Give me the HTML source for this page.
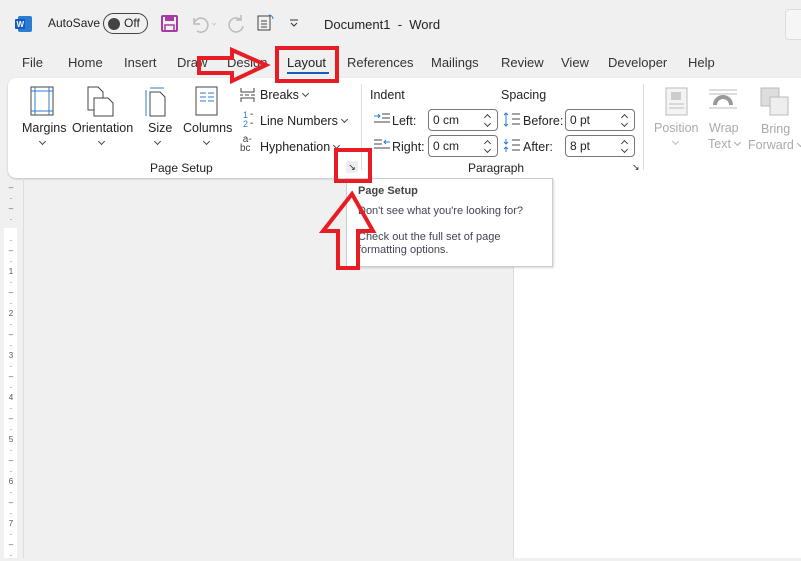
<!DOCTYPE html>
<html><head><style>
*{margin:0;padding:0;box-sizing:border-box}
body{width:801px;height:558px;overflow:hidden;background:#f0f0f0;font-family:"Liberation Sans",sans-serif;color:#222;position:relative;font-size:12px}
.a{position:absolute;white-space:nowrap}
.tab{position:absolute;top:55px;font-size:13px;color:#333}
.g{color:#aaa}
.cv{position:absolute;width:5px;height:5px;border-right:1.2px solid #444;border-bottom:1.2px solid #444;transform:rotate(45deg)}
.ci{display:inline-block;width:5px;height:5px;border-right:1.2px solid #444;border-bottom:1.2px solid #444;transform:rotate(45deg);margin:0 0 3px 4px}
.g .ci{border-color:#aaa}
.spin{position:absolute;width:70px;height:22px;border:1px solid #777;border-radius:4px;background:#fff;font-size:12px;padding:3px 4px}
.up,.dn{position:absolute;right:7px;width:5px;height:5px;border-left:1px solid #444;border-top:1px solid #444}
.up{top:5px;transform:rotate(45deg)}.dn{top:11px;transform:rotate(225deg)}
</style></head><body>
<svg class="a" style="left:15px;top:16px" width="18" height="16"><rect x="3" y="0" width="14" height="16" rx="2" fill="#2b7cd3"/><rect x="0" y="3" width="10" height="10" rx="1" fill="#185abd"/><text x="1.5" y="11" font-size="8" fill="#fff" font-family="Liberation Sans" font-weight="bold">W</text></svg>
<div class="a" style="left:48px;top:16px;font-size:12px">AutoSave</div>
<div class="a" style="left:103px;top:13px;width:45px;height:21px;border:1px solid #444;border-radius:11px"></div>
<div class="a" style="left:108px;top:18px;width:12px;height:12px;border-radius:6px;background:#444"></div>
<div class="a" style="left:124px;top:16px;font-size:12px">Off</div>
<svg class="a" style="left:161px;top:15px" width="17" height="17"><rect x="1" y="1" width="15" height="15" rx="1" fill="none" stroke="#a83aa3" stroke-width="2"/><rect x="4" y="1" width="9" height="5" fill="#a83aa3"/><rect x="4" y="10" width="9" height="6" fill="none" stroke="#a83aa3" stroke-width="1.5"/></svg>
<svg class="a" style="left:190px;top:14px" width="30" height="20"><path d="M4 4v6h6M4 10a7 7 0 1 1 3 7" stroke="#bbb" stroke-width="1.5" fill="none"/><path d="M22 9l2 2 2-2" stroke="#ccc" fill="none"/></svg>
<svg class="a" style="left:227px;top:13px" width="20" height="20"><path d="M14 2v5h-5" stroke="#bbb" stroke-width="1.5" fill="none"/><path d="M14 7a7 7 0 1 0 2 6" stroke="#bbb" stroke-width="1.5" fill="none"/></svg>
<svg class="a" style="left:257px;top:14px" width="18" height="18"><rect x="1" y="2" width="12" height="14" fill="none" stroke="#444"/><path d="M4 7h6M4 10h6M4 13h6" stroke="#444"/><path d="M12 1a4 4 0 0 1 4 4" stroke="#2b7cd3" fill="none"/></svg>
<svg class="a" style="left:289px;top:18px" width="10" height="10"><path d="M1 2h8M2 5l3 3 3-3" stroke="#333" fill="none"/></svg>
<div class="a" style="left:324px;top:17px;font-size:13px">Document1 &nbsp;- &nbsp;Word</div>
<div class="a" style="left:785px;top:9px;width:30px;height:31px;border:1px solid #ddd;border-radius:4px;background:#f6f6f6"></div>
<div class="tab" style="left:22px">File</div><div class="tab" style="left:68px">Home</div><div class="tab" style="left:124px">Insert</div><div class="tab" style="left:177px">Draw</div><div class="tab" style="left:227px">Design</div><div class="tab" style="left:287px;color:#222">Layout</div>
<div class="a" style="left:287px;top:72px;width:42px;height:2px;background:#185abd"></div>
<div class="tab" style="left:347px">References</div><div class="tab" style="left:431px">Mailings</div><div class="tab" style="left:501px">Review</div><div class="tab" style="left:561px">View</div><div class="tab" style="left:608px">Developer</div><div class="tab" style="left:688px">Help</div>
<div class="a" style="left:8px;top:78px;width:800px;height:100px;background:#fff;border-radius:8px;box-shadow:0 1px 2px rgba(0,0,0,.2)"></div>
<svg class="a" style="left:30px;top:86px" width="26" height="32"><rect x="1" y="1" width="22" height="28" fill="none" stroke="#444"/><path d="M5 1v28M19 1v28M1 5h22M1 25h22" stroke="#2b7cd3"/></svg>
<svg class="a" style="left:86px;top:86px" width="32" height="32"><path d="M2 1h10l5 5v18H2z" fill="none" stroke="#444"/><path d="M8 12h14l5 5v13H8z" fill="#fff" stroke="#444"/></svg>
<svg class="a" style="left:144px;top:86px" width="26" height="32"><path d="M6 2h14M2 4v26" stroke="#2b7cd3"/><path d="M6 6h10l5 5v19H6z" fill="none" stroke="#444"/></svg>
<svg class="a" style="left:195px;top:86px" width="24" height="32"><rect x="1" y="1" width="21" height="28" fill="none" stroke="#444"/><path d="M5 7h6M13 7h6M5 11h6M13 11h6M5 15h6M13 15h6" stroke="#2b7cd3"/></svg>
<div class="a" style="left:22px;top:121px;font-size:12.5px">Margins</div><div class="a" style="left:72px;top:121px;font-size:12.5px">Orientation</div><div class="a" style="left:148px;top:121px;font-size:12.5px">Size</div><div class="a" style="left:183px;top:121px;font-size:12.5px">Columns</div>
<div class="cv" style="left:40px;top:139px"></div><div class="cv" style="left:99px;top:139px"></div><div class="cv" style="left:155px;top:139px"></div><div class="cv" style="left:204px;top:139px"></div>
<svg class="a" style="left:239px;top:87px" width="18" height="16"><path d="M2 1v4h13V1M2 15v-4h13v4M1 8h3M6 8h4M12 8h4" stroke="#444" fill="none"/></svg>
<div class="a" style="left:260px;top:88px;font-size:12.5px">Breaks<span class="ci"></span></div>
<div class="a" style="left:243px;top:111px;font-size:9px;color:#2b7cd3;line-height:9px">1<br>2</div><div class="a" style="left:250px;top:110px;font-size:10px;line-height:9px">-<br>-</div>
<div class="a" style="left:260px;top:114px;font-size:12.5px">Line Numbers<span class="ci"></span></div>
<div class="a" style="left:240px;top:135px;font-size:10px;line-height:9px;color:#444">&nbsp;a-<br>bc</div>
<div class="a" style="left:260px;top:140px;font-size:12.5px">Hyphenation<span class="ci"></span></div>
<div class="a" style="left:150px;top:161px;font-size:12px">Page Setup</div>
<div class="a" style="left:346px;top:161px;width:12px;height:12px;background:#eee;border-radius:2px;font-size:9px;text-align:center;line-height:12px">↘</div>
<div class="a" style="left:361px;top:84px;width:1px;height:86px;background:#ddd"></div>
<div class="a" style="left:370px;top:88px;font-size:12.5px">Indent</div><div class="a" style="left:501px;top:88px;font-size:12.5px">Spacing</div>
<svg class="a" style="left:373px;top:113px" width="18" height="12"><path d="M1 3h6M5 1l2 2-2 2" stroke="#2b7cd3" fill="none"/><path d="M9 1h8M9 5h8M1 9h16" stroke="#444"/></svg>
<div class="a" style="left:392px;top:114px;font-size:12.5px">Left:</div>
<svg class="a" style="left:373px;top:139px" width="18" height="12"><path d="M1 1h8M1 5h8M1 9h16" stroke="#444"/><path d="M11 3h6M13 1l-2 2 2 2" stroke="#2b7cd3" fill="none"/></svg>
<div class="a" style="left:392px;top:140px;font-size:12.5px">Right:</div>
<div class="spin" style="left:428px;top:109px">0 cm<i class="up"></i><i class="dn"></i></div><div class="spin" style="left:428px;top:135px">0 cm<i class="up"></i><i class="dn"></i></div>
<svg class="a" style="left:503px;top:112px" width="18" height="15"><path d="M3 1v13M1 3l2-2 2 2M1 12l2 2 2-2" stroke="#2b7cd3" fill="none"/><path d="M9 2h8M9 7h8M9 12h8" stroke="#444"/></svg>
<div class="a" style="left:523px;top:114px;font-size:12.5px">Before:</div>
<svg class="a" style="left:503px;top:138px" width="18" height="15"><path d="M3 1v5M3 9v5M1 4l2 2 2-2M1 11l2-2 2 2" stroke="#2b7cd3" fill="none"/><path d="M9 2h8M9 7h8M9 12h8" stroke="#444"/></svg>
<div class="a" style="left:523px;top:140px;font-size:12.5px">After:</div>
<div class="spin" style="left:565px;top:109px">0 pt<i class="up"></i><i class="dn"></i></div><div class="spin" style="left:565px;top:135px">8 pt<i class="up"></i><i class="dn"></i></div>
<div class="a" style="left:468px;top:161px;font-size:12px">Paragraph</div>
<div class="a" style="left:632px;top:162px;font-size:9px">↘</div>
<div class="a" style="left:643px;top:84px;width:1px;height:86px;background:#ddd"></div>
<svg class="a" style="left:665px;top:87px" width="24" height="30"><rect x="1" y="1" width="21" height="27" fill="#f4f4f4" stroke="#bbb"/><rect x="6" y="5" width="10" height="8" fill="#ccc"/><path d="M4 17h15M4 21h15" stroke="#bbb"/></svg>
<svg class="a" style="left:708px;top:88px" width="30" height="24"><path d="M1 2h28M1 6h28M1 20h28" stroke="#bbb"/><path d="M7 17a8 8 0 0 1 16 0" stroke="#999" stroke-width="4" fill="none"/></svg>
<svg class="a" style="left:760px;top:87px" width="30" height="30"><rect x="1" y="1" width="18" height="18" fill="#ddd" stroke="#bbb"/><rect x="10" y="10" width="18" height="18" fill="#eee" stroke="#bbb"/></svg>
<div class="a g" style="left:654px;top:121px;font-size:12.5px">Position</div><div class="cv" style="left:673px;top:139px;border-color:#bbb"></div>
<div class="a g" style="left:709px;top:121px;font-size:12.5px">Wrap</div><div class="a g" style="left:708px;top:137px;font-size:12.5px">Text<span class="ci"></span></div>
<div class="a g" style="left:761px;top:122px;font-size:12.5px">Bring</div><div class="a g" style="left:748px;top:138px;font-size:12.5px">Forward<span class="ci"></span></div>
<div class="a" style="left:23px;top:178px;width:1px;height:380px;background:#ddd"></div>
<div class="a" style="left:513px;top:178px;width:288px;height:380px;background:#fff;border-left:1px solid #ddd"></div>
<div class="a" style="left:4px;top:228px;width:13px;height:330px;background:#fff"></div>
<div class="a" style="left:6px;top:183px;font-size:8px;line-height:10.5px;color:#555;text-align:center;width:10px">–<br>·<br>–<br>·<br><br>·<br>–<br>·<br>1<br>·<br>–<br>·<br>2<br>·<br>–<br>·<br>3<br>·<br>–<br>·<br>4<br>·<br>–<br>·<br>5<br>·<br>–<br>·<br>6<br>·<br>–<br>·<br>7<br>·<br>–<br>·</div>
<div class="a" style="left:346px;top:178px;width:207px;height:89px;background:#fff;border:1px solid #ccc;box-shadow:1px 1px 2px rgba(0,0,0,.15)"></div>
<div class="a" style="left:358px;top:185px;font-size:11px;font-weight:bold;color:#444">Page Setup</div>
<div class="a" style="left:358px;top:205px;font-size:11px;color:#445">Don't see what you're looking for?</div>
<div class="a" style="left:358px;top:231px;font-size:11px;color:#445;line-height:13px">Check out the full set of page<br>formatting options.</div>
<svg class="a" style="left:0;top:0" width="801" height="558">
<g fill="none" stroke="#e81c24" stroke-width="4">
<rect x="277" y="48" width="60" height="33"/>
<rect x="336" y="150" width="34" height="31"/>
<path d="M199 58h33v-8l34 15-34 16v-8h-33z"/>
<path d="M352 194l21 37h-15v37h-20v-37h-15z"/>
</g></svg>
</body></html>
